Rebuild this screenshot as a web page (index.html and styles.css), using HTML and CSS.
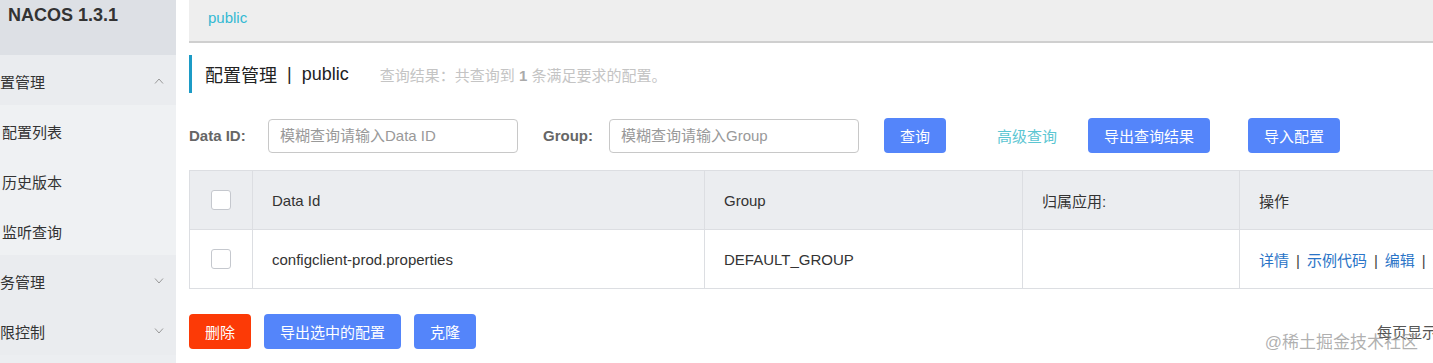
FILE: index.html
```html
<!DOCTYPE html>
<html lang="zh-CN">
<head>
  <meta charset="UTF-8">
  <title>配置管理 - Nacos</title>
  <link rel="stylesheet" href="styles.css">
</head>
<body>

<div class="layout">
  <aside class="sidebar">
    <div class="brand">NACOS 1.3.1</div>
    <ul class="menu">
      <li class="menu-item">
        <span>配置管理</span>
        <svg class="chevron" width="10" height="6" viewBox="0 0 10 6"><polyline points="1,5.5 5,1 9,5.5"/></svg>
      </li>
      <li class="sub-item">配置列表</li>
      <li class="sub-item">历史版本</li>
      <li class="sub-item">监听查询</li>
      <li class="menu-item">
        <span>服务管理</span>
        <svg class="chevron" width="10" height="6" viewBox="0 0 10 6"><polyline points="1,0.5 5,5 9,0.5"/></svg>
      </li>
      <li class="menu-item">
        <span>权限控制</span>
        <svg class="chevron" width="10" height="6" viewBox="0 0 10 6"><polyline points="1,0.5 5,5 9,0.5"/></svg>
      </li>
    </ul>
  </aside>

  <main class="main">
    <div class="ns-bar">
      <a href="#" class="ns-link">public</a>
    </div>

    <div class="page-title">
      <span class="title-text">配置管理</span>
      <span class="title-sep">|</span>
      <span class="title-text">public</span>
      <span class="query-result">查询结果：共查询到 <b>1</b> 条满足要求的配置。</span>
    </div>

    <!-- barre de recherche -->
    <div class="search">
      <div class="field">
        <label class="label-dataid">Data ID:</label>
        <input type="text" placeholder="模糊查询请输入Data ID">
      </div>
      <div class="field">
        <label class="label-group">Group:</label>
        <input type="text" placeholder="模糊查询请输入Group">
      </div>
      <a href="#" class="btn btn-primary">查询</a>
      <a href="#" class="btn-link">高级查询</a>
      <a href="#" class="btn btn-primary">导出查询结果</a>
      <a href="#" class="btn btn-primary btn-import">导入配置</a>
    </div>

    <table class="config-table">
      <colgroup>
        <col style="width:63px">
        <col style="width:452px">
        <col style="width:318px">
        <col style="width:217px">
        <col style="width:250px">
      </colgroup>
      <thead>
        <tr>
          <th class="check-cell"><span class="checkbox"></span></th>
          <th>Data Id</th>
          <th>Group</th>
          <th>归属应用:</th>
          <th>操作</th>
        </tr>
      </thead>
      <tbody>
        <tr>
          <td class="check-cell"><span class="checkbox"></span></td>
          <td>configclient-prod.properties</td>
          <td>DEFAULT_GROUP</td>
          <td></td>
          <td class="ops">
            <a href="#">详情</a><span class="sep">|</span><a href="#">示例代码</a><span class="sep">|</span><a href="#">编辑</a><span class="sep">|</span><a href="#">删除</a>
          </td>
        </tr>
      </tbody>
    </table>

    <div class="footer-bar">
      <a href="#" class="btn btn-danger">删除</a>
      <a href="#" class="btn btn-primary">导出选中的配置</a>
      <a href="#" class="btn btn-primary">克隆</a>
      <div class="pagination">
        <span>每页显示</span>
        <select class="page-size"><option>10</option></select>
      </div>
    </div>
  </main>
</div>

<div class="watermark">@稀土掘金技术社区</div>

</body>
</html>
```

FILE: styles.css
```css
:root {
  --primary: #5485fa;
  --danger: #fc3a06;
  --cyan: #33b9d3;
  --text: #333333;
  --border: #dcdee2;
}

* {
  margin: 0;
  padding: 0;
  box-sizing: border-box;
}

html, body {
  height: 100%;
}

body {
  font-family: 'Liberation Sans', 'Noto Sans CJK SC', sans-serif;
  font-size: 15px;
  color: var(--text);
  background: #fff;
  overflow: hidden;
  position: relative;
}

a {
  text-decoration: none;
}

.layout {
  display: flex;
  height: 100%;
}

/* Sidebar */
.sidebar {
  width: 176px;
  flex-shrink: 0;
  background: #eceef1;
  overflow: hidden;
}

.brand {
  height: 55px;
  background: #dde0e5;
  padding: 5px 0 0 8px;
  font-size: 18px;
  font-weight: bold;
  line-height: 20px;
  color: #333;
}

.menu {
  list-style: none;
  margin-left: -40px;
  width: 216px;
}

.menu li {
  height: 50px;
  padding-top: 2px;
  display: flex;
  align-items: center;
  white-space: nowrap;
}

.menu-item {
  background: #eaecef;
  padding: 0 12px 0 25px;
  justify-content: space-between;
}

.sub-item {
  background: #eff1f3;
  padding-left: 42px;
}

.chevron {
  fill: none;
  stroke: #999;
  stroke-width: 1;
}

/* Contenu */
.main {
  flex: 1;
  min-width: 0;
  padding-left: 13px;
  overflow: hidden;
}

.ns-bar {
  height: 43px;
  background: #eeeeee;
  border-bottom: 2px solid #cfcfcf;
  padding: 8px 0 0 19px;
  line-height: 20px;
}

.ns-link {
  color: var(--cyan);
}

.page-title {
  margin-top: 12px;
  height: 38px;
  border-left: 3px solid #1c9bc6;
  padding-left: 13px;
  display: flex;
  align-items: center;
  white-space: nowrap;
}

.title-text {
  font-size: 18px;
  color: #222;
}

.title-sep {
  font-size: 18px;
  margin: 0 10px;
  color: #222;
}

.query-result {
  margin-left: 31px;
  color: #c4c4c4;
  font-size: 15px;
}

.query-result b {
  color: #aaa;
}

/* Recherche */
.search {
  margin-top: 25px;
  display: flex;
  align-items: center;
  gap: 25px;
  white-space: nowrap;
}

.field {
  display: flex;
  align-items: center;
  gap: 16px;
}

.field label {
  font-weight: bold;
  color: #666;
}

.label-dataid {
  width: 63px;
}

.label-group {
  width: 50px;
}

.field input {
  width: 250px;
  height: 34px;
  border: 1px solid #c8c8c8;
  border-radius: 4px;
  padding: 0 11px;
  font-family: inherit;
  font-size: 15px;
  color: #333;
}

.field input::placeholder {
  color: #999;
}

.btn {
  display: inline-flex;
  align-items: center;
  height: 35px;
  padding: 0 16px;
  border-radius: 4px;
  color: #fff;
  white-space: nowrap;
}

.btn-primary {
  background: var(--primary);
}

.btn-danger {
  background: var(--danger);
}

.btn-link {
  color: #5cc6d2;
  padding: 0 6px 0 26px;
}

.btn-import {
  margin-left: 13px;
}

/* Tableau */
.config-table {
  margin-top: 17px;
  width: 1300px;
  table-layout: fixed;
  border-collapse: collapse;
  border: 1px solid var(--border);
}

.config-table th,
.config-table td {
  height: 59px;
  padding: 0 20px 0 19px;
  text-align: left;
  font-weight: normal;
  border: 1px solid var(--border);
  white-space: nowrap;
  overflow: hidden;
}

.config-table thead tr {
  background: #ebedf0;
}

.config-table .check-cell {
  padding: 0;
  text-align: center;
}

.checkbox {
  display: inline-block;
  width: 20px;
  height: 20px;
  background: #fff;
  border: 1px solid #c5c8ce;
  border-radius: 3px;
  vertical-align: middle;
}

.ops a {
  color: #2a74c7;
}

.ops .sep {
  margin: 0 7px;
  color: #444;
}

/* Bas de page */
.footer-bar {
  margin-top: 25px;
  width: 1300px;
  display: flex;
  align-items: center;
  gap: 13px;
}

.pagination {
  margin-left: auto;
  width: 112px;
  display: flex;
  align-items: center;
  gap: 6px;
  color: #555;
  white-space: nowrap;
}

.page-size {
  width: 46px;
  height: 28px;
}

.watermark {
  position: absolute;
  right: 15px;
  bottom: 10px;
  font-size: 17px;
  color: rgba(150, 150, 150, 0.75);
  pointer-events: none;
}
```
